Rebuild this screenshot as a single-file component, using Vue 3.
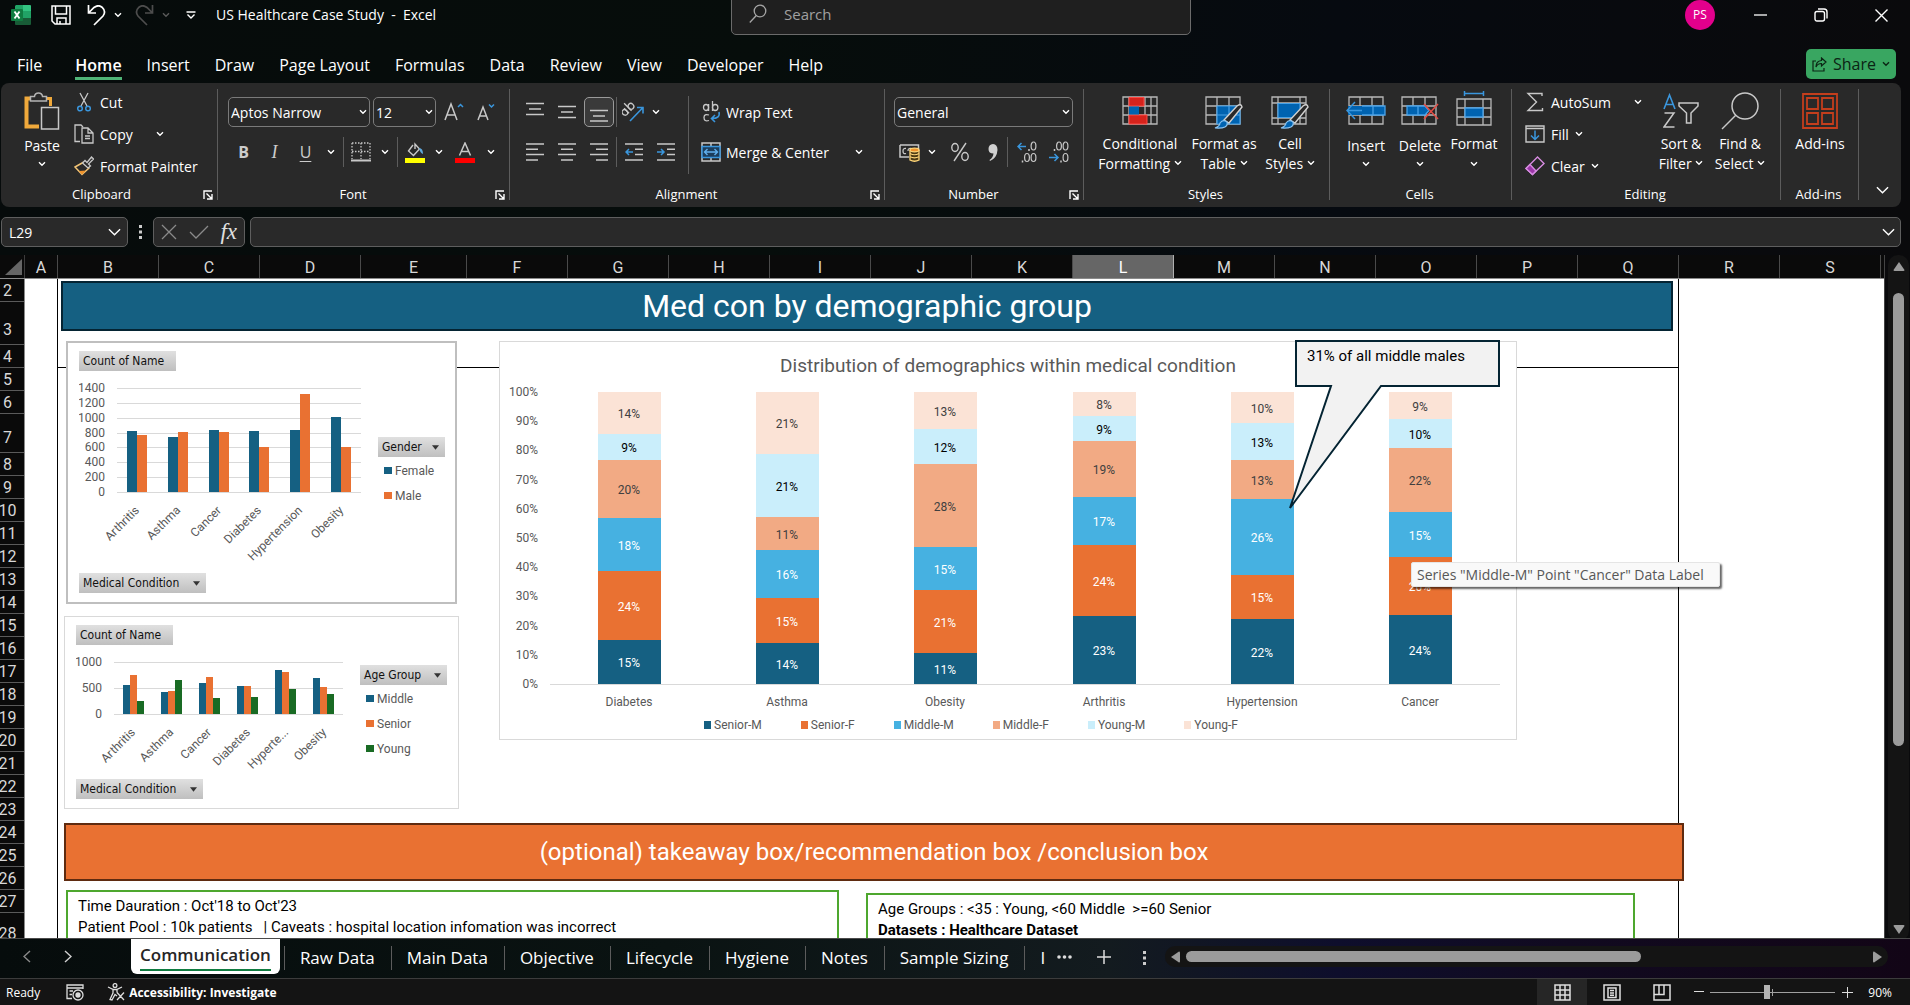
<script setup>
import { ref } from 'vue'

const ribbonTabs = ['File', 'Home', 'Insert', 'Draw', 'Page Layout', 'Formulas', 'Data', 'Review', 'View', 'Developer', 'Help']
const sheetTabs = ['Raw Data', 'Main Data', 'Objective', 'Lifecycle', 'Hygiene', 'Notes', 'Sample Sizing']
const zoom = ref(45)

const columns = 'ABCDEFGHIJKLMNOPQRS'.split('').map((name) => ({
  name,
  width: name === 'A' ? 33 : name === 'E' ? 106 : 101,
}))
const rowHeights = { 2: 23, 3: 43, 7: 39, 28: 32 }
const rows = Array.from({ length: 27 }, (_, i) => ({ n: i + 2, height: rowHeights[i + 2] || 23 }))

const conditions = ['Arthritis', 'Asthma', 'Cancer', 'Diabetes', 'Hypertension', 'Obesity']

function columnChart(opts) {
  const { left, right, zero, top, max, step, barWidth, series, labels } = opts
  const slot = (right - left) / labels.length
  const scale = (zero - top) / max
  const ticks = []
  for (let v = 0; v <= max; v += step) ticks.push({ v, y: Math.round(zero - v * scale) })
  const bars = []
  labels.forEach((label, i) => {
    const start = Math.round(left + slot * (i + 0.5) - (barWidth * series.length) / 2)
    series.forEach((s, j) => {
      const h = Math.round(s.values[i] * scale)
      bars.push({ key: label + s.name, x: start + j * barWidth, y: zero - h, w: barWidth, h, fill: s.color })
    })
  })
  const names = labels.map((text, i) => ({ text, x: Math.round(left + slot * (i + 0.5)) + 3 }))
  return { left, right, zero, ticks, bars, names, series }
}

const genderChart = columnChart({
  left: 38, right: 282, zero: 121, top: 17, max: 1400, step: 200, barWidth: 10,
  labels: conditions,
  series: [
    { name: 'Female', color: '#156082', values: [825, 745, 840, 825, 840, 1015] },
    { name: 'Male', color: '#e97132', values: [770, 810, 810, 610, 1325, 610] },
  ],
})
const ageChart = columnChart({
  left: 38, right: 267, zero: 69, top: 17, max: 1000, step: 500, barWidth: 7,
  labels: ['Arthritis', 'Asthma', 'Cancer', 'Diabetes', 'Hyperte...', 'Obesity'],
  series: [
    { name: 'Middle', color: '#156082', values: [560, 430, 600, 545, 850, 700] },
    { name: 'Senior', color: '#e97132', values: [755, 450, 715, 545, 815, 525] },
    { name: 'Young', color: '#196b24', values: [255, 660, 315, 335, 485, 390] },
  ],
})

const stackSeries = [
  { name: 'Senior-M', color: '#156082', text: '#ffffff' },
  { name: 'Senior-F', color: '#e97132', text: '#ffffff' },
  { name: 'Middle-M', color: '#46b1e1', text: '#ffffff' },
  { name: 'Middle-F', color: '#f2aa84', text: '#404040' },
  { name: 'Young-M', color: '#caeefb', text: '#000000' },
  { name: 'Young-F', color: '#fbe3d6', text: '#404040' },
]
const stackData = [
  { name: 'Diabetes', heights: [44, 69, 53, 58, 26, 42], labels: [15, 24, 18, 20, 9, 14] },
  { name: 'Asthma', heights: [41, 45, 48, 33, 63, 62], labels: [14, 15, 16, 11, 21, 21] },
  { name: 'Obesity', heights: [31, 63, 43, 83, 35, 37], labels: [11, 21, 15, 28, 12, 13] },
  { name: 'Arthritis', heights: [68, 71, 48, 56, 25, 24], labels: [23, 24, 17, 19, 9, 8] },
  { name: 'Hypertension', heights: [65, 44, 76, 39, 37, 31], labels: [22, 15, 26, 13, 13, 10] },
  { name: 'Cancer', heights: [69, 58, 45, 64, 29, 27], labels: [24, 20, 15, 22, 10, 9] },
]
const stackZero = 307
const stacks = stackData.map((c, i) => {
  const x = 98 + Math.round(i * 158.2)
  let y = stackZero
  const parts = c.heights.map((h, j) => {
    y -= h
    return { x, y, h, label: c.labels[j] + '%', fill: stackSeries[j].color, text: stackSeries[j].text }
  })
  return { name: c.name, cx: x + 31, parts }
})
const percentTicks = Array.from({ length: 11 }, (_, i) => ({ v: i * 10 + '%', y: Math.round(stackZero - i * 29.2) }))
</script>

<template>
  <div class="excel">
    <svg class="defs" aria-hidden="true">
      <symbol id="chevron" viewBox="0 0 8 6"><path d="M1 1.2 L4 4.2 L7 1.2" fill="none" stroke="currentColor" stroke-width="1.4" /></symbol>
      <symbol id="chevron-lg" viewBox="0 0 14 8"><path d="M1 1 L7 7 L13 1" fill="none" stroke="currentColor" stroke-width="1.5" /></symbol>
      <symbol id="launcher" viewBox="0 0 10 10"><path d="M1 9 V1 H9 M3.5 3.5 L8.5 8.5 M9 4 V9 H4" fill="none" stroke="currentColor" stroke-width="1.4" /></symbol>
      <symbol id="caret" viewBox="0 0 8 5"><path d="M0 0 H8 L4 5 Z" fill="#333" /></symbol>
    </svg>

    <header class="titlebar">
      <svg class="logo" viewBox="0 0 20 20">
        <path d="M5 0 H12 V7 H4 V1 Z" fill="#21a366" /><path d="M12 0 H19 Q20 0 20 1 V6 H12 Z" fill="#33c481" />
        <path d="M4 6 H12 V14 H4 Z" fill="#107c41" /><path d="M12 6 H20 V13 H12 Z" fill="#21a366" />
        <path d="M4 13 H20 V19 Q20 20 19 20 H5 Q4 20 4 19 Z" fill="#185c37" /><rect y="4" width="12" height="12" rx="1" fill="#107c41" />
        <path d="M3.5 6.5 L8.5 13.5 M8.5 6.5 L3.5 13.5" stroke="#fff" stroke-width="1.9" />
      </svg>
      <button class="tb save" aria-label="Save">
        <svg width="20" height="20" viewBox="0 0 20 20" fill="none" stroke="#fff" stroke-width="1.5"><path d="M1 1 H19 V19 H4 L1 16 Z M4.500 1 V9 H15.500 V1 M6 19 V13 H15 V19 M9 16 V19" /></svg>
      </button>
      <button class="tb undo" aria-label="Undo">
        <svg width="19" height="21" viewBox="0 0 19 21" fill="none" stroke="#fff" stroke-width="1.7"><path d="M1.500 0 V8 H9 M1.500 8 L7 2.500 Q11-.8 15 2.200 Q19.500 6.500 16 11 L7 20" /></svg>
      </button>
      <svg class="chev tbchev"><use href="#chevron" /></svg>
      <button class="tb redo" aria-label="Redo">
        <svg width="19" height="21" viewBox="0 0 19 21" fill="none" stroke="#4d4d4d" stroke-width="1.7"><path d="M17.500 0 V8 H10 M17.500 8 L12 2.500 Q8-.8 4 2.200 Q-.5 6.500 3 11 L12 20" /></svg>
      </button>
      <svg class="chev tbchev dim"><use href="#chevron" /></svg>
      <svg class="customize" width="10" height="8" viewBox="0 0 10 8" fill="none" stroke="#fff" stroke-width="1.4"><path d="M0.500 1 H9.500 M1.500 3.500 L5 7 L8.500 3.500" /></svg>
      <h1>US Healthcare Case Study&nbsp; -&nbsp; Excel</h1>
      <label class="search">
        <svg width="18" height="20" viewBox="0 0 18 20" fill="none" stroke="#a6a6a6" stroke-width="1.3"><circle cx="11" cy="7" r="5.800" /><path d="M7.300 11.500 L0.800 18.500" /></svg>
        <input type="search" placeholder="Search" aria-label="Search">
      </label>
      <div class="window">
        <span class="avatar">PS</span>
        <button aria-label="Minimize"><svg width="13" height="13" viewBox="0 0 13 13"><path d="M0 6 H13" stroke="#fff" stroke-width="1.300" /></svg></button>
        <button aria-label="Restore"><svg width="14" height="14" viewBox="0 0 14 14" fill="none" stroke="#fff" stroke-width="1.400"><rect x="1" y="3.500" width="9.500" height="9.500" rx="2" /><path d="M4 1 H10 Q13 1 13 4 V10.500" /></svg></button>
        <button aria-label="Close"><svg width="13" height="13" viewBox="0 0 13 13"><path d="M0.500 0.500 L12.500 12.500 M12.500 0.500 L0.500 12.500" stroke="#fff" stroke-width="1.400" /></svg></button>
      </div>
    </header>

    <nav class="tabs">
      <button v-for="t in ribbonTabs" :key="t" :class="{ active: t === 'Home' }">{{ t }}</button>
      <button class="share">
        <svg width="15" height="15" viewBox="0 0 15 15" fill="none" stroke="#0b2414" stroke-width="1.200"><path d="M4 4 H1 V14 H12 V11 M9.500 1 L14 5 L9.500 9 V6.500 Q5.500 6.500 4 10 Q4 4 9.500 3.500 Z" /></svg>
        Share
        <svg class="chev"><use href="#chevron" /></svg>
      </button>
    </nav>

    <section class="ribbon">
      <div class="group g-clip">
        <div class="body">
          <button class="big low paste">
            <span class="pic"><svg width="36" height="38" viewBox="0 0 36 38" fill="none"><path d="M8 6.500 H2.500 V34.500 H15" stroke="#f0a93b" stroke-width="4" /><path d="M20 6.500 H26.500 V14" stroke="#f0a93b" stroke-width="3" /><path d="M6.500 9 V4.500 H10.500 Q11 1 14.500 1 Q18 1 18.500 4.500 H22.500 V9 Z" fill="#292929" stroke="#b4b4b4" stroke-width="1.500" /><rect x="17.500" y="15.500" width="17" height="21.500" fill="#292929" stroke="#c8c8c8" stroke-width="1.500" /></svg></span>
            <span>Paste</span>
            <svg class="chev below"><use href="#chevron" /></svg>
          </button>
          <div class="list">
            <button><svg width="20" height="20" viewBox="0 0 20 20" fill="none"><path d="M6 1 L13 14 M14 1 L7 14" stroke="#c8c8c8" stroke-width="1.300" /><circle cx="6" cy="16.500" r="2.300" stroke="#3a96dd" stroke-width="1.500" /><circle cx="14" cy="16.500" r="2.300" stroke="#3a96dd" stroke-width="1.500" /></svg>Cut</button>
            <button><svg width="20" height="20" viewBox="0 0 20 20" fill="none" stroke="#c8c8c8" stroke-width="1.300"><path d="M6 17.500 H1 V1 H7 L9 3" /><path d="M8 4 H14 L19 9 V19 H8 Z M14 4 V9 H19 M11 12 H16 M11 14.500 H16" /></svg>Copy<svg class="chev gap-md"><use href="#chevron" /></svg></button>
            <button><svg width="20" height="20" viewBox="0 0 20 20" fill="none"><path d="M1 11 L9 6.500 L15 12 L8 18.500 Z" stroke="#f0c274" stroke-width="1.500" /><path d="M5 15 L12 14.500 L8 18.500 Z" fill="#f0922b" /><path d="M8.500 7 L11 4.500 L13 6.500 L17.500 1 L19.500 3 L14.500 8 L16.500 10 L14 12 Z" fill="#292929" stroke="#c8c8c8" stroke-width="1.300" /></svg>Format Painter</button>
          </div>
        </div>
        <footer>Clipboard<svg class="launch"><use href="#launcher" /></svg></footer>
      </div>

      <div class="group g-font">
        <div class="body stack">
          <div class="row">
            <label class="combo font-name"><select aria-label="Font"><option>Aptos Narrow</option></select><svg class="chev"><use href="#chevron" /></svg></label>
            <label class="combo font-size"><select aria-label="Font size"><option>12</option></select><svg class="chev"><use href="#chevron" /></svg></label>
            <button class="t w32" aria-label="Increase font size"><svg width="20" height="20" viewBox="0 0 20 20" fill="none"><path d="M1 18 L7 2 L13 18 M3 13 H11" stroke="#c8c8c8" stroke-width="1.500" /><path d="M14 5 L16.500 2.500 L19 5" stroke="#3a96dd" stroke-width="1.500" /></svg></button>
            <button class="t w32" aria-label="Decrease font size"><svg width="20" height="20" viewBox="0 0 20 20" fill="none"><path d="M2 18 L7 5 L12 18 M4 14 H10" stroke="#c8c8c8" stroke-width="1.500" /><path d="M13 2.500 L15.500 5 L18 2.500" stroke="#3a96dd" stroke-width="1.500" /></svg></button>
          </div>
          <div class="row">
            <button class="t w31 bold">B</button><button class="t w31 italic">I</button><button class="t w31 under">U</button>
            <button class="t w20" aria-label="Underline options"><svg class="chev"><use href="#chevron" /></svg></button>
            <i class="sep" />
            <button class="t w28" aria-label="Borders"><svg width="20" height="20" viewBox="0 0 20 20" fill="none" stroke="#c8c8c8" stroke-width="1.300"><path d="M1 1 H19 M1 9.500 H19 M1 1 V17 M10 1 V17 M19 1 V17" stroke-dasharray="1.500 1.500" /><path d="M0 18.500 H20" stroke-width="2" /></svg></button>
            <button class="t w20" aria-label="Border options"><svg class="chev"><use href="#chevron" /></svg></button>
            <i class="sep" />
            <button class="t w28" aria-label="Fill color"><svg width="20" height="21" viewBox="0 0 20 21" fill="none"><path d="M8 3 L3.500 9 L8.500 13.500 L14.500 7 L10 2 V7" stroke="#c8c8c8" stroke-width="1.400" /><path d="M14 6 Q18 6 18 12 Q15 11 14 6 Z" fill="#5fa8dc" /><rect y="16" width="20" height="5" fill="#ff0" /></svg></button>
            <button class="t w20" aria-label="Fill options"><svg class="chev"><use href="#chevron" /></svg></button>
            <button class="t w32" aria-label="Font color"><svg width="20" height="21" viewBox="0 0 20 21" fill="none"><path d="M4.500 13.500 L10 1 L15.500 13.500 M6.500 9.500 H13.500" stroke="#c8c8c8" stroke-width="1.500" /><rect y="16" width="20" height="5" fill="#f00" /></svg></button>
            <button class="t w20" aria-label="Font color options"><svg class="chev"><use href="#chevron" /></svg></button>
          </div>
        </div>
        <footer>Font<svg class="launch"><use href="#launcher" /></svg></footer>
      </div>

      <div class="group g-align">
        <div class="body">
          <div class="stack">
            <div class="row spaced">
              <button class="t w30" aria-label="Top align"><svg width="18" height="20" viewBox="0 0 18 20" stroke="#c8c8c8" stroke-width="1.500"><path d="M0 1.500 H18 M3 7 H15 M0 12.500 H18" /></svg></button>
              <button class="t w30" aria-label="Middle align"><svg width="18" height="20" viewBox="0 0 18 20" stroke="#c8c8c8" stroke-width="1.500"><path d="M0 4.500 H18 M3 10 H15 M0 15.500 H18" /></svg></button>
              <button class="t w30 pressed" aria-label="Bottom align"><svg width="18" height="20" viewBox="0 0 18 20" stroke="#c8c8c8" stroke-width="1.500"><path d="M0 8.500 H18 M3 14 H15 M0 19 H18" /></svg></button>
              <i class="sep flush" />
              <button class="t w28" aria-label="Orientation"><svg width="22" height="22" viewBox="0 0 22 22" fill="none"><g transform="rotate(-45 6 9)" stroke="#c8c8c8" stroke-width="1.300"><ellipse cx="2" cy="8.500" rx="2.500" ry="3" /><path d="M4.500 5 V12 M8 1.500 V12" /><ellipse cx="10.700" cy="8.500" rx="2.700" ry="3" /></g><path d="M8 20 L20.500 7 M15 6.500 H21 V12.500" stroke="#3a96dd" stroke-width="1.600" /></svg></button>
              <button class="t w14" aria-label="Orientation options"><svg class="chev"><use href="#chevron" /></svg></button>
            </div>
            <div class="row spaced">
              <button class="t w30" aria-label="Align left"><svg width="18" height="20" viewBox="0 0 18 20" stroke="#c8c8c8" stroke-width="1.500"><path d="M0 2 H18 M0 7.300 H12 M0 12.600 H18 M0 18 H12" /></svg></button>
              <button class="t w30" aria-label="Center"><svg width="18" height="20" viewBox="0 0 18 20" stroke="#c8c8c8" stroke-width="1.500"><path d="M0 2 H18 M3 7.300 H15 M0 12.600 H18 M3 18 H15" /></svg></button>
              <button class="t w30" aria-label="Align right"><svg width="18" height="20" viewBox="0 0 18 20" stroke="#c8c8c8" stroke-width="1.500"><path d="M0 2 H18 M6 7.300 H18 M0 12.600 H18 M6 18 H18" /></svg></button>
              <i class="sep flush" />
              <button class="t w30" aria-label="Decrease indent"><svg width="18" height="20" viewBox="0 0 18 20" fill="none" stroke="#c8c8c8" stroke-width="1.500"><path d="M0 2 H18 M10 7.300 H18 M10 12.600 H18 M0 18 H18" /><path d="M8 10 H1 M4 7 L1 10 L4 13" stroke="#3a96dd" /></svg></button>
              <button class="t w30" aria-label="Increase indent"><svg width="18" height="20" viewBox="0 0 18 20" fill="none" stroke="#c8c8c8" stroke-width="1.500"><path d="M0 2 H18 M10 7.300 H18 M10 12.600 H18 M0 18 H18" /><path d="M0 10 H7 M4 7 L7 10 L4 13" stroke="#3a96dd" /></svg></button>
            </div>
          </div>
          <i class="sep tall" />
          <div class="stack">
            <button class="wide"><svg width="20" height="24" viewBox="0 0 20 24" fill="none"><g stroke="#c8c8c8" stroke-width="1.300"><ellipse cx="5" cy="7.500" rx="2.500" ry="3" /><path d="M7.600 4 V11 M11.500 1 V11" /><ellipse cx="14.200" cy="7.500" rx="2.700" ry="3" /><path d="M8 15 Q3 13.500 3 17.500 Q3 22 8 20.500" /></g><path d="M18 12 Q19.500 18.500 11 18.500 M14 15 L10.500 18.500 L14 22" stroke="#3a96dd" stroke-width="1.600" /></svg>Wrap Text</button>
            <button class="wide"><svg width="20" height="20" viewBox="0 0 20 20" fill="none"><path d="M1 1 H19 V19 H1 Z M10 1 V4 M10 16 V19" stroke="#c8c8c8" stroke-width="1.500" /><path d="M1 4.500 H19 V15.500 H1 Z" fill="#1c3d5c" stroke="#3a96dd" stroke-width="1.500" /><path d="M3.500 10 H16.500 M6.500 7 L3.500 10 L6.500 13 M13.500 7 L16.500 10 L13.500 13" stroke="#60b0ee" stroke-width="1.400" /></svg>Merge &amp; Center<svg class="chev gap-lg"><use href="#chevron" /></svg></button>
          </div>
        </div>
        <footer>Alignment<svg class="launch"><use href="#launcher" /></svg></footer>
      </div>

      <div class="group g-number">
        <div class="body stack">
          <div class="row"><label class="combo format"><select aria-label="Number format"><option>General</option></select><svg class="chev"><use href="#chevron" /></svg></label></div>
          <div class="row">
            <button class="t w30" aria-label="Accounting format"><svg width="21" height="20" viewBox="0 0 21 20" fill="none"><path d="M1 3 H19.500 V9 M1 3 V15 H10" stroke="#c8c8c8" stroke-width="1.500" /><path d="M7 6.500 Q4 6 4 9 Q4 12.500 7 11.500 M12 6.500 Q9 6 9 9" stroke="#c8c8c8" stroke-width="1.300" /><path d="M11 8 V18 Q15.500 20.500 20 18 V8" fill="#4d3b14" stroke="#ffd679" stroke-width="1.300" /><ellipse cx="15.500" cy="8" rx="4.500" ry="1.800" fill="#f0922b" stroke="#ffd679" stroke-width="1.200" /><path d="M11 11.500 Q15.500 14 20 11.500 M11 14.800 Q15.500 17 20 14.800" stroke="#ffd679" stroke-width="1.200" /></svg></button>
            <button class="t w16" aria-label="Accounting options"><svg class="chev"><use href="#chevron" /></svg></button>
            <button class="t w40" aria-label="Percent style"><svg width="18" height="20" viewBox="0 0 18 20" fill="none" stroke="#c8c8c8" stroke-width="1.400"><ellipse cx="4" cy="5.500" rx="3.200" ry="4" /><ellipse cx="14" cy="14.500" rx="3.200" ry="4" /><path d="M15 1 L3 19" /></svg></button>
            <button class="t w25" aria-label="Comma style"><svg width="10" height="17" viewBox="0 0 10 17"><path d="M5 0 Q9.500 0.500 9.500 6 Q9 14 2 17 L1.500 16 Q5 13.500 5.500 9.500 Q0.500 9.500 0.500 5 Q0.500 0.500 5 0 Z" fill="#d0d0d0" /></svg></button>
            <i class="sep" />
            <button class="t w32" aria-label="Increase decimal"><svg width="20" height="22" viewBox="0 0 20 22" fill="none"><path d="M9 5.500 H1 M4.500 2 L1 5.500 L4.500 9" stroke="#3a96dd" stroke-width="1.500" /><g stroke="#c8c8c8" stroke-width="1.200"><ellipse cx="16.500" cy="5" rx="2.400" ry="4" /><ellipse cx="10" cy="16.500" rx="2.400" ry="4" /><ellipse cx="16.500" cy="16.500" rx="2.400" ry="4" /><path d="M12 8 V10 M5.500 19.500 V21.500" stroke-width="1.500" /></g></svg></button>
            <button class="t w32" aria-label="Decrease decimal"><svg width="20" height="22" viewBox="0 0 20 22" fill="none"><path d="M0 16.500 H9 M5.500 13 L9 16.500 L5.500 20" stroke="#3a96dd" stroke-width="1.500" /><g stroke="#c8c8c8" stroke-width="1.200"><ellipse cx="10" cy="5" rx="2.400" ry="4" /><ellipse cx="16.500" cy="5" rx="2.400" ry="4" /><ellipse cx="16.500" cy="16.500" rx="2.400" ry="4" /><path d="M5.500 8 V10 M12 19.500 V21.500" stroke-width="1.500" /></g></svg></button>
          </div>
        </div>
        <footer>Number<svg class="launch"><use href="#launcher" /></svg></footer>
      </div>

      <div class="group g-styles">
        <div class="body">
          <button class="big w84">
            <span class="pic"><svg width="36" height="30" viewBox="0 0 36 30" fill="none"><path d="M1 1 H35 V28 H1 Z M1 10 H35 M1 19 H35 M7 1 V28 M29 1 V28 M23 1 V28" stroke="#b8b8b8" stroke-width="1.300" /><path d="M7 1.500 H22 V10 H7 Z M7 19 H25 V28 H7 Z" fill="#d6231c" stroke="#ff4b44" /><path d="M7 10.500 H17 V18.500 H7 Z" fill="#0063b1" /></svg></span>
            <span>Conditional</span><span>Formatting <svg class="chev"><use href="#chevron" /></svg></span>
          </button>
          <button class="big w84">
            <span class="pic"><svg width="38" height="36" viewBox="0 0 38 36" fill="none"><path d="M1 4 H35 V31 H1 Z M1 13 H35 M1 22 H35 M12 4 V31 M24 4 V31" stroke="#b8b8b8" stroke-width="1.300" /><path d="M12 13 H35 V31 H12 Z M24 13 V31 M12 22 H35" fill="#0063b1" stroke="#4aa3e8" stroke-width="1.200" /><path d="M19 27 L32 13 Q36 10 37 14 L24 30 Z" fill="#292929" stroke="#d0d0d0" stroke-width="1.400" /><path d="M10 35 Q15 33 15 30 Q18 26 22 29 Q24 36 10 35 Z" fill="#0063b1" stroke="#8cc4f0" stroke-width="1.200" /></svg></span>
            <span>Format as</span><span>Table <svg class="chev"><use href="#chevron" /></svg></span>
          </button>
          <button class="big w48">
            <span class="pic"><svg width="38" height="36" viewBox="0 0 38 36" fill="none"><path d="M1 4 H35 V31 H1 Z M1 10 H35 M1 25 H35 M7 4 V31 M29 4 V31" stroke="#b8b8b8" stroke-width="1.300" /><path d="M7 10.500 H29 V24.500 H7 Z" fill="#0063b1" stroke="#4aa3e8" stroke-width="1.200" /><path d="M19 27 L32 13 Q36 10 37 14 L24 30 Z" fill="#292929" stroke="#d0d0d0" stroke-width="1.400" /><path d="M10 35 Q15 33 15 30 Q18 26 22 29 Q24 36 10 35 Z" fill="#0063b1" stroke="#8cc4f0" stroke-width="1.200" /></svg></span>
            <span>Cell</span><span>Styles <svg class="chev"><use href="#chevron" /></svg></span>
          </button>
        </div>
        <footer>Styles</footer>
      </div>

      <div class="group g-cells">
        <div class="body">
          <button class="big low w54">
            <span class="pic"><svg width="40" height="30" viewBox="0 0 40 30" fill="none"><path d="M3 1 H37 V28 H3 Z M3 10 H37 M3 19 H37 M14 1 V28 M26 1 V28" stroke="#b8b8b8" stroke-width="1.300" /><path d="M2 10 H39 V19 H2 Z" fill="#0063b1" /><path d="M16 10 H39 V19 H16 M27 10 V19" stroke="#4aa3e8" stroke-width="1.300" /><path d="M16 14.500 H1 M9 6 L1 14.500 L9 23" stroke="#3a96dd" stroke-width="1.500" /></svg></span>
            <span>Insert</span><svg class="chev below"><use href="#chevron" /></svg>
          </button>
          <button class="big low w54">
            <span class="pic"><svg width="40" height="30" viewBox="0 0 40 30" fill="none"><path d="M2 1 H36 V28 H2 Z M2 10 H36 M2 19 H36 M13 1 V28 M25 1 V28" stroke="#b8b8b8" stroke-width="1.300" /><path d="M7 10 H25 L29 14.500 L25 19 H7 Z M18 10 V19" fill="#0063b1" stroke="#4aa3e8" stroke-width="1.300" /><path d="M24 8 L38 23 M38 8 L24 23" stroke="#e04b43" stroke-width="1.600" /></svg></span>
            <span>Delete</span><svg class="chev below"><use href="#chevron" /></svg>
          </button>
          <button class="big w54">
            <span class="pic top"><svg width="36" height="36" viewBox="0 0 36 36" fill="none"><path d="M8.500 2.500 H27.500 M8.500 0 V5 M27.500 0 V5" stroke="#3a96dd" stroke-width="1.500" /><path d="M1 8 H35 V34 H1 Z M1 17 H35 M1 26 H35 M9 8 V34 M27 8 V34" stroke="#b8b8b8" stroke-width="1.300" /><path d="M9 17 H27 V26 H9 Z" fill="#0063b1" stroke="#4aa3e8" stroke-width="1.300" /></svg></span>
            <span>Format</span><svg class="chev below"><use href="#chevron" /></svg>
          </button>
        </div>
        <footer>Cells</footer>
      </div>

      <div class="group g-edit">
        <div class="body">
          <div class="list">
            <button><svg width="20" height="20" viewBox="0 0 20 20" fill="none" stroke="#c8c8c8" stroke-width="1.400"><path d="M17 4 V1.500 H3 L11.500 10 L3 18.500 H17.500 V16" /></svg>AutoSum<svg class="chev gap-md"><use href="#chevron" /></svg></button>
            <button><svg width="20" height="18" viewBox="0 0 20 18" fill="none"><path d="M1 1 H19 V17 H1 Z M1 3.500 H19" stroke="#c8c8c8" stroke-width="1.400" /><path d="M10 5.500 V14 M6 10.500 L10 14.500 L14 10.500" stroke="#3a96dd" stroke-width="1.500" /></svg>Fill<svg class="chev"><use href="#chevron" /></svg></button>
            <button><svg width="20" height="20" viewBox="0 0 20 20" fill="none" stroke="#d68be0" stroke-width="1.400"><path d="M12.500 1 L19 7.500 L7.500 18.500 L1 12.500 Z" /><path d="M5 8.500 L11 15 L7.500 18.500 L1 12.500 Z" fill="#9b36a8" /></svg>Clear<svg class="chev"><use href="#chevron" /></svg></button>
          </div>
          <button class="big w62">
            <span class="pic"><svg width="36" height="36" viewBox="0 0 36 36" fill="none"><path d="M1 16 L6.500 2 L12 16 M3 11.500 H10" stroke="#3a96dd" stroke-width="1.600" /><path d="M1.500 20 H11 L1 34 H11.500" stroke="#c8c8c8" stroke-width="1.500" /><path d="M16 10 H35 V13 L28 20 V30 H23.500 V20 L16 13 Z" stroke="#c8c8c8" stroke-width="1.500" /></svg></span>
            <span>Sort &amp;</span><span>Filter <svg class="chev"><use href="#chevron" /></svg></span>
          </button>
          <button class="big w56">
            <span class="pic"><svg width="38" height="38" viewBox="0 0 38 38" fill="none" stroke="#c8c8c8" stroke-width="1.500"><circle cx="24" cy="14" r="13" /><path d="M15 23 L1 37" /></svg></span>
            <span>Find &amp;</span><span>Select <svg class="chev"><use href="#chevron" /></svg></span>
          </button>
        </div>
        <footer>Editing</footer>
      </div>

      <div class="group g-add">
        <div class="body">
          <button class="big">
            <span class="pic"><svg width="36" height="36" viewBox="0 0 36 36" fill="none" stroke="#c43e1c" stroke-width="1.800"><path d="M1 1 H35 V35 H1 Z M5 5 H16 V16 H5 Z M20 5 H31 V16 H20 Z M5 20 H16 V31 H5 Z M20 20 H31 V31 H20 Z" /></svg></span>
            <span>Add-ins</span>
          </button>
        </div>
        <footer>Add-ins</footer>
      </div>
      <button class="collapse" aria-label="Collapse ribbon"><svg width="13" height="8"><use href="#chevron-lg" /></svg></button>
    </section>

    <section class="formula-bar">
      <label class="field name-box"><input value="L29" aria-label="Name box"><svg width="13" height="8"><use href="#chevron-lg" /></svg></label>
      <svg class="dots" width="4" height="14" viewBox="0 0 4 14" fill="#ccc"><path d="M0 0 H3 V3 H0 Z M0 5.500 H3 V8.500 H0 Z M0 11 H3 V14 H0 Z" /></svg>
      <div class="field fx">
        <svg width="16" height="16" viewBox="0 0 16 16" stroke="#8a8a8a" stroke-width="1.300"><path d="M1 1 L15 15 M15 1 L1 15" /></svg>
        <svg width="20" height="14" viewBox="0 0 20 14" fill="none" stroke="#8a8a8a" stroke-width="1.300"><path d="M1 7 L7 13 L19 1" /></svg>
        <button aria-label="Insert function"><em>fx</em></button>
      </div>
      <label class="field formula"><input aria-label="Formula"><svg width="13" height="8"><use href="#chevron-lg" /></svg></label>
    </section>

    <main class="workspace">
      <div class="grid">
        <div class="col-heads">
          <span class="corner"><svg width="17" height="16" viewBox="0 0 17 16"><path d="M17 0 V16 H0 Z" fill="#666" /></svg></span>
          <span v-for="c in columns" :key="c.name" class="col" :class="{ selected: c.name === 'L' }" :style="{ width: c.width + 'px' }">{{ c.name }}</span>
        </div>
        <div class="sheet-row">
          <div class="row-heads">
            <span v-for="r in rows" :key="r.n" :class="{ tall: r.height > 35 }" :style="{ height: r.height + 'px' }">{{ r.n }}</span>
          </div>
          <div class="canvas">
            <div class="print-top" />
            <div class="print-area" />
            <h2 class="banner blue">Med con by demographic group</h2>

            <article class="chart gender">
              <button class="pivot w97">Count of Name</button>
              <div class="chart-body">
                <svg width="290" height="202" class="axis">
                  <g v-for="t in genderChart.ticks" :key="t.v">
                    <line :x1="genderChart.left" :x2="genderChart.right" :y1="t.y + 0.5" :y2="t.y + 0.5" stroke="#d9d9d9" />
                    <text x="26" :y="t.y + 4" text-anchor="end">{{ t.v }}</text>
                  </g>
                  <rect v-for="b in genderChart.bars" :key="b.key" :x="b.x" :y="b.y" :width="b.w" :height="b.h" :fill="b.fill" />
                  <text v-for="n in genderChart.names" :key="n.text" text-anchor="end" :transform="`translate(${n.x} 140) rotate(-45)`">{{ n.text }}</text>
                </svg>
                <div class="side">
                  <button class="pivot w67">Gender<svg width="7" height="5"><use href="#caret" /></svg></button>
                  <ul><li v-for="s in genderChart.series" :key="s.name"><i :style="{ background: s.color }" />{{ s.name }}</li></ul>
                </div>
              </div>
              <button class="pivot w127">Medical Condition<svg width="7" height="5"><use href="#caret" /></svg></button>
            </article>

            <article class="chart age">
              <button class="pivot w97">Count of Name</button>
              <div class="chart-body">
                <svg width="284" height="134" class="axis">
                  <g v-for="t in ageChart.ticks" :key="t.v">
                    <line :x1="ageChart.left" :x2="ageChart.right" :y1="t.y + 0.5" :y2="t.y + 0.5" stroke="#d9d9d9" />
                    <text x="26" :y="t.y + 4" text-anchor="end">{{ t.v }}</text>
                  </g>
                  <rect v-for="b in ageChart.bars" :key="b.key" :x="b.x" :y="b.y" :width="b.w" :height="b.h" :fill="b.fill" />
                  <text v-for="n in ageChart.names" :key="n.text" text-anchor="end" :transform="`translate(${n.x} 88) rotate(-45)`">{{ n.text }}</text>
                </svg>
                <div class="side">
                  <button class="pivot w87">Age Group<svg width="7" height="5"><use href="#caret" /></svg></button>
                  <ul><li v-for="s in ageChart.series" :key="s.name"><i :style="{ background: s.color }" />{{ s.name }}</li></ul>
                </div>
              </div>
              <button class="pivot w127">Medical Condition<svg width="7" height="5"><use href="#caret" /></svg></button>
            </article>

            <article class="chart stacked">
              <h3>Distribution of demographics within medical condition</h3>
              <svg width="1016" height="334" class="axis">
                <text v-for="t in percentTicks" :key="t.v" x="38" :y="t.y + 4" text-anchor="end">{{ t.v }}</text>
                <g v-for="s in stacks" :key="s.name">
                  <g v-for="(p, j) in s.parts" :key="j">
                    <rect :x="p.x" :y="p.y" width="63" :height="p.h" :fill="p.fill" />
                    <text :x="s.cx" :y="p.y + Math.round(p.h / 2) + 5" text-anchor="middle" :style="{ fill: p.text }">{{ p.label }}</text>
                  </g>
                  <text :x="s.cx" y="329" text-anchor="middle">{{ s.name }}</text>
                </g>
                <line x1="50" x2="1000" y1="307.5" y2="307.5" stroke="#d9d9d9" />
              </svg>
              <ul><li v-for="s in stackSeries" :key="s.name"><i :style="{ background: s.color }" />{{ s.name }}</li></ul>
            </article>

            <div class="callout">
              <svg width="213" height="172" viewBox="0 0 213 172"><path d="M8 1 H211 V46 H93 L2 168 L43 46 H8 Z" fill="#f2f2f2" stroke="#042433" stroke-width="2" /></svg>
              <p>31% of all middle males</p>
            </div>
            <div class="tooltip" role="tooltip">Series "Middle-M" Point "Cancer" Data Label</div>

            <h2 class="banner orange">(optional) takeaway box/recommendation box /conclusion box</h2>
            <div class="note left">
              <p>Time Dauration : Oct'18 to Oct'23</p>
              <p>Patient Pool : 10k patients &nbsp; | Caveats : hospital location infomation was incorrect</p>
            </div>
            <div class="note right">
              <p>Age Groups : &lt;35 : Young, &lt;60 Middle&nbsp; &gt;=60 Senior</p>
              <p><b>Datasets : Healthcare Dataset</b></p>
            </div>
          </div>
        </div>
      </div>
      <div class="vscroll">
        <svg width="12" height="9" viewBox="0 0 12 9"><path d="M6 0 L11.500 8 Q11.500 9 10.500 9 H1.500 Q0.500 9 0.500 8 Z" fill="#9b9b9b" /></svg>
        <span class="thumb" />
        <svg width="12" height="9" viewBox="0 0 12 9"><path d="M6 9 L11.500 1 Q11.500 0 10.500 0 H1.500 Q0.500 0 0.500 1 Z" fill="#9b9b9b" /></svg>
      </div>
    </main>

    <nav class="sheets">
      <button class="arrow prev" aria-label="Previous sheet"><svg width="8" height="13" viewBox="0 0 8 13" fill="none" stroke="#8a8a8a" stroke-width="1.400"><path d="M7 1 L1 6.500 L7 12" /></svg></button>
      <button class="arrow" aria-label="Next sheet"><svg width="8" height="13" viewBox="0 0 8 13" fill="none" stroke="#d0d0d0" stroke-width="1.400"><path d="M1 1 L7 6.500 L1 12" /></svg></button>
      <button class="current"><span>Communication</span></button>
      <button v-for="s in sheetTabs" :key="s" class="sheet">{{ s }}</button>
      <button class="sheet cut">I</button>
      <button class="extra" aria-label="More sheets"><svg width="15" height="4" viewBox="0 0 15 4" fill="#ddd"><circle cx="2" cy="2" r="1.800" /><circle cx="7.500" cy="2" r="1.800" /><circle cx="13" cy="2" r="1.800" /></svg></button>
      <button class="extra add" aria-label="New sheet"><svg width="14" height="14" viewBox="0 0 14 14" stroke="#ddd" stroke-width="1.500"><path d="M7 0 V14 M0 7 H14" /></svg></button>
      <svg class="grip" width="4" height="14" viewBox="0 0 4 14" fill="#ccc"><path d="M0 0 H3 V3 H0 Z M0 5.500 H3 V8.500 H0 Z M0 11 H3 V14 H0 Z" /></svg>
      <div class="hscroll">
        <svg width="9" height="12" viewBox="0 0 9 12"><path d="M0 6 L8 0.500 Q9 0.500 9 1.500 V10.500 Q9 11.500 8 11.500 Z" fill="#9b9b9b" /></svg>
        <span class="hthumb" />
        <svg width="9" height="12" viewBox="0 0 9 12"><path d="M9 6 L1 0.500 Q0 0.500 0 1.500 V10.500 Q0 11.500 1 11.500 Z" fill="#9b9b9b" /></svg>
      </div>
    </nav>

    <footer class="status">
      <span>Ready</span>
      <svg class="macro" width="18" height="17" viewBox="0 0 18 17" fill="none" stroke="#ddd" stroke-width="1.300"><path d="M6 14.500 H1 V1 H17 V5 M1 4 H17 M3.500 7 H7 M3.500 10.500 H6" /><circle cx="12" cy="11" r="5" /><circle cx="12" cy="11" r="2" fill="#ddd" /></svg>
      <button class="access"><svg width="18" height="18" viewBox="0 0 18 18" fill="none" stroke="#ddd" stroke-width="1.300"><circle cx="8" cy="2.500" r="1.900" /><path d="M1 4 L6 6.500 V10 L3 16.500 L5 17 L8 11.500 L10 13 M15 4 L10 6.500 V9.500 M6 6.500 H10 M10 9.500 L17 17 M17 9.500 L10 17" /></svg>Accessibility: Investigate</button>
      <div class="views">
        <button class="on" aria-label="Normal view"><svg width="17" height="17" viewBox="0 0 17 17" fill="none" stroke="#e0e0e0" stroke-width="1.500"><path d="M1 1 H16 V16 H1 Z M1 6 H16 M1 11 H16 M6 1 V16 M11 1 V16" /></svg></button>
        <button aria-label="Page layout view"><svg width="18" height="17" viewBox="0 0 18 17" fill="none" stroke="#e0e0e0" stroke-width="1.500"><path d="M1 1 H17 V16 H1 Z M5 4 H13 V13.500 H5 Z M7 6.500 H11 M7 9 H11 M7 11.300 H11" /></svg></button>
        <button aria-label="Page break preview"><svg width="18" height="17" viewBox="0 0 18 17" fill="none" stroke="#e0e0e0" stroke-width="1.500"><path d="M1 1 H17 V16 H1 Z M1 10.500 H11 V1 M6 1 V10.500" /></svg></button>
      </div>
      <button class="zoom-btn" aria-label="Zoom out"><svg width="10" height="10" viewBox="0 0 10 10" stroke="#ddd"><path d="M0 4.500 H10" /></svg></button>
      <input v-model="zoom" class="slider" type="range" min="0" max="100" aria-label="Zoom">
      <button class="zoom-btn" aria-label="Zoom in"><svg width="11" height="11" viewBox="0 0 11 11" stroke="#ddd"><path d="M0 5.500 H11 M5.500 0 V11" /></svg></button>
      <span class="percent">90%</span>
    </footer>
  </div>
</template>

<style>
body { margin: 0; background: #060b0b; }
</style>

<style scoped>
* { box-sizing: border-box; }
.excel { height: 100vh; display: flex; flex-direction: column; overflow: hidden; font-family: "Open Sans", "Noto Sans", sans-serif; font-size: 14px; color: #fff; background: linear-gradient(90deg, #060b0b 0%, #060d0b 40%, #060a10 70%, #0a0a0c 100%); }
.defs { position: absolute; width: 0; height: 0; }
button { font: inherit; color: inherit; background: none; border: 0; padding: 0; margin: 0; white-space: nowrap; }
h1, h2, h3, p, ul { margin: 0; padding: 0; font-weight: 400; list-style: none; }
svg { flex: none; display: block; }
.chev { width: 8px; height: 6px; }

.titlebar { flex: none; height: 36px; padding: 0 22px 6px 11px; display: flex; align-items: center; position: relative; }
.logo { width: 20px; height: 20px; }
.save { margin-left: 20px; }
.undo { margin-left: 16px; }
.tbchev { margin-left: 8px; }
.redo { margin-left: 13px; }
.dim { color: #5a5a5a; }
.customize { margin-left: 16px; }
.titlebar h1 { margin-left: 20px; font-size: 14px; line-height: 20px; white-space: nowrap; }
.search { position: absolute; top: -7px; left: 50%; width: 460px; height: 42px; margin-left: -224px; padding: 0 17px; display: flex; align-items: center; gap: 17px; background: #1f1f1f; border: 1px solid #6b6b6b; border-radius: 5px; }
.search input { flex: 1; background: none; border: 0; outline: 0; padding: 0; font: 15px "Open Sans", sans-serif; color: #fff; }
.search input::placeholder { color: #a0a0a0; opacity: 1; }
.window { margin-left: auto; display: flex; align-items: center; gap: 47px; }
.avatar { width: 30px; height: 30px; margin-right: -8px; border-radius: 50%; background: #e3008c; font-size: 12px; line-height: 30px; text-align: center; }

.tabs { flex: none; height: 47px; padding: 12px 14px 3px 17px; display: flex; align-items: center; gap: 25px; font-size: 16px; }
.tabs button { height: 32px; padding-top: 5px; line-height: 24px; border-bottom: 3px solid transparent; }
.tabs button:first-child { margin-right: 8px; }
.tabs .active { font-weight: 600; border-color: #4fb477; }
.tabs .share { margin-left: auto; width: 90px; height: 30px; padding: 0; display: flex; align-items: center; justify-content: center; gap: 6px; background: #39a661; border: 0; border-radius: 5px; color: #0b2414; }

.ribbon { flex: none; height: 124px; margin: 0 9px 0 1px; padding-top: 4px; display: flex; background: #292929; border-radius: 8px; overflow: hidden; }
.group { flex: none; position: relative; display: flex; flex-direction: column; }
.group::after { content: ""; position: absolute; right: 0; top: 2px; height: 111px; width: 1px; background: #5c5c5c; }
.g-clip { width: 217px; }
.g-font { width: 292px; }
.g-align { width: 375px; }
.g-number { width: 199px; }
.g-styles { width: 246px; }
.g-cells { width: 182px; }
.g-edit { width: 269px; }
.g-add { width: 78px; }
.body { height: 100px; display: flex; }
.group footer { position: relative; height: 14px; line-height: 14px; font-size: 13px; text-align: center; padding-right: 22px; }
.g-clip footer { padding-right: 16px; }
.g-styles footer, .g-cells footer, .g-edit footer, .g-add footer { padding-right: 3px; }
.launch { position: absolute; right: 5px; top: 3px; width: 10px; height: 10px; }
.stack { display: flex; flex-direction: column; gap: 10px; padding-top: 10px; }
.g-font .stack { padding-left: 10px; }
.g-number .stack { padding-left: 9px; }
.g-align .stack:first-child { width: 178px; padding-left: 10px; }
.row { height: 30px; display: flex; align-items: center; }
.spaced { gap: 2px; }
.t { height: 30px; display: flex; align-items: center; justify-content: center; border-radius: 5px; }
.w14 { width: 14px; } .w16 { width: 16px; } .w20 { width: 20px; } .w25 { width: 25px; } .w28 { width: 28px; }
.w30 { width: 30px; } .w31 { width: 31px; } .w32 { width: 32px; } .w40 { width: 40px; } .w48 { width: 48px; }
.w54 { width: 54px; } .w56 { width: 56px; } .w62 { width: 62px; } .w84 { width: 84px; }
.w67 { width: 67px; } .w87 { width: 87px; } .w97 { width: 97px; } .w127 { width: 127px; }
.bold { font-weight: 700; font-size: 16px; color: #ccc; }
.italic { font: italic 18px "Liberation Serif", serif; color: #ccc; }
.under { font-size: 16px; color: #ccc; text-decoration: underline; text-underline-offset: 3px; }
.pressed { background: #3a3a3a; border: 1px solid #9a9a9a; }
.sep { flex: none; width: 1px; height: 30px; margin: 0 3px 0 2px; background: #5c5c5c; }
.sep.flush { margin: 0; }
.sep.tall { height: 78px; margin: 9px 10px 0 0; }
.combo { position: relative; display: block; height: 30px; }
.combo select { width: 100%; height: 30px; appearance: none; padding: 0 2px; background: #292929; color: #fff; border: 1px solid #7a7a7a; border-radius: 5px; font: 14px "Open Sans", sans-serif; }
.combo .chev { position: absolute; right: 3px; top: 12px; }
.font-name { width: 142px; margin-right: 3px; }
.font-size { width: 63px; margin-right: 2px; }
.format { width: 179px; }
.list { display: flex; flex-direction: column; margin-top: -1px; }
.list button { height: 32px; display: flex; align-items: center; gap: 6px; }
.g-clip .list { padding-left: 4px; }
.g-edit .list { width: 125px; }
.g-edit .body { padding-left: 13px; }
.gap-md { margin-left: 17px; }
.gap-lg { margin-left: 21px; }
.wide { height: 30px; display: flex; align-items: center; gap: 5px; padding-left: 2px; }
.big { display: flex; flex-direction: column; align-items: center; padding-top: 6px; height: 96px; line-height: 20px; }
.big .chev { display: inline-block; vertical-align: 3px; }
.big .below { margin-top: 7px; display: block; }
.pic { height: 36px; margin-bottom: 5px; display: flex; align-items: center; }
.pic.top { align-items: flex-start; margin-top: -2px; margin-bottom: 7px; }
.low .pic { margin-bottom: 7px; }
.low .below { margin-top: 5px; }
.paste { width: 56px; margin-left: 13px; }
.g-styles .body { padding-left: 14px; }
.g-cells .body { padding-left: 9px; }
.g-add .big { width: 100%; }
.collapse { margin: 99px 12px 0 auto; height: 8px; }

.formula-bar { flex: none; height: 48px; padding: 10px 9px 8px 1px; display: flex; }
.field { height: 30px; display: flex; align-items: center; background: #292929; border: 1px solid #5e5e5e; border-radius: 5px; }
.field input { flex: 1; min-width: 0; background: none; border: 0; outline: 0; padding: 0 0 0 7px; color: #fff; font: 14px "Open Sans", sans-serif; }
.name-box { width: 127px; padding-right: 6px; }
.dots { margin: 8px 10px 0 11px; }
.fx { width: 92px; padding: 0 7px 0 7px; justify-content: space-between; }
.fx em { font: italic 23px/26px "Liberation Serif", serif; color: #e0e0e0; }
.formula { flex: 1; margin-left: 5px; padding-right: 5px; }

.workspace { flex: 1; min-height: 0; display: flex; gap: 3px; }
.grid { flex: 1; min-width: 0; display: flex; flex-direction: column; border-right: 1px solid #444; font-family: Roboto, sans-serif; }
.col-heads { flex: none; height: 24px; display: flex; background: #0a0a0a; border-bottom: 1px solid #8a8a8a; overflow: hidden; }
.corner { flex: none; width: 25px; padding: 4px 0 0 5px; border-right: 1px solid #3c3c3c; }
.col { flex: none; border-right: 1px solid #4a4a4a; text-align: center; font-size: 16px; line-height: 25px; color: #d8d8d8; }
.col.selected { background: #666; border-color: #b0b0b0; color: #fff; }
.sheet-row { flex: 1; min-height: 0; display: flex; }
.row-heads { flex: none; width: 25px; overflow: hidden; background: #0a0a0a; border-right: 1px solid #8a8a8a; }
.row-heads span { display: flex; align-items: flex-end; justify-content: center; padding-right: 9px; border-bottom: 1px solid #5a5a5a; font-size: 16px; line-height: 20px; color: #d8d8d8; }
.row-heads .tall { padding-bottom: 4px; }
.canvas { flex: 1; min-width: 0; position: relative; overflow: hidden; background: #fff; color: #000; }
.print-top, .print-area { position: absolute; left: 32px; width: 1622px; border: solid #000; border-width: 0 1px; }
.print-top { top: 0; height: 89px; border-bottom-width: 1px; }
.print-area { top: 88px; bottom: 0; }
.banner { position: absolute; display: flex; align-items: center; justify-content: center; color: #fff; border: 2px solid; white-space: nowrap; }
.blue { left: 36px; top: 2px; width: 1612px; height: 50px; font-size: 32px; background: #156082; border-color: #042433; }
.orange { left: 39px; top: 544px; width: 1620px; height: 58px; font-size: 24px; background: #e97132; border-color: #5f2b10; }
.chart { position: absolute; display: flex; flex-direction: column; align-items: flex-start; background: #fff; border: 1px solid #d9d9d9; color: #595959; font-size: 12px; }
.axis text { font-size: 12px; fill: #595959; }
.gender { left: 41px; top: 62px; width: 391px; padding: 8px 11px 9px; border: 2px solid #bfbfbf; }
.age { left: 39px; top: 337px; width: 395px; padding: 8px 11px 9px; }
.chart-body { display: flex; }
.gender .side { padding: 66px 0 0 9px; }
.age .side { padding-top: 20px; }
.side ul { padding: 1px 0 0 6px; }
.side li { display: flex; align-items: center; gap: 3px; height: 25px; }
.side li i { width: 8px; height: 7px; }
.pivot { height: 20px; display: flex; align-items: center; justify-content: space-between; padding: 0 6px 0 4px; background: linear-gradient(#e0e0e0, #bfbfbf); color: #111; font: 12px "DejaVu Sans Condensed", "DejaVu Sans", sans-serif; }
.stacked { left: 474px; top: 62px; width: 1018px; height: 399px; padding-top: 11px; align-items: center; }
.stacked h3 { font-size: 19px; line-height: 26px; margin-bottom: -2px; }
.stacked ul { display: flex; gap: 39px; margin-right: 74px; }
.stacked li { display: flex; align-items: center; gap: 3px; line-height: 28px; }
.stacked li i { width: 7px; height: 8px; }
.callout { position: absolute; left: 1263px; top: 61px; }
.callout p { position: absolute; left: 19px; top: 6px; font-size: 15px; line-height: 20px; white-space: nowrap; }
.tooltip { position: absolute; left: 1386px; top: 283px; width: 309px; height: 25px; padding-left: 5px; background: #f9f9f9; color: #575757; border: 1px solid #e5e5e5; border-radius: 2px; box-shadow: 2px 2px 2px rgba(0, 0, 0, .6); font: 14px/23px "Open Sans", sans-serif; white-space: nowrap; }
.note { position: absolute; padding: 4px 10px; height: 100px; border: 2px solid #4ea72e; font-size: 15px; line-height: 21px; white-space: nowrap; }
.note.left { left: 41px; top: 611px; width: 773px; }
.note.right { left: 841px; top: 614px; width: 769px; }
.vscroll { flex: none; width: 21px; margin-right: 1px; margin-bottom: -3px; padding: 7px 0; display: flex; flex-direction: column; align-items: center; background: #141414; border-radius: 10px; }
.thumb { width: 11px; height: 453px; margin: 22px 0 auto; border-radius: 6px; background: #9b9b9b; }

.sheets { flex: none; height: 40px; padding-right: 22px; display: flex; border-top: 1px solid #4a4a4a; font-size: 17px; background: linear-gradient(90deg, #060c0c 0%, #0a1312 35%, #131b1f 58%, #0e0e2c 70%, #110a20 82%, #120516 100%); }
.arrow { display: flex; align-items: center; width: 40px; height: 35px; }
.prev { padding-left: 23px; width: 64px; }
.current { height: 35px; margin: 0 4px 0 27px; padding: 0 9px; background: #fff; border-radius: 0 0 6px 6px; color: #262626; font-weight: 600; }
.current span { display: block; border-bottom: 2px solid #107c41; line-height: 26px; padding-bottom: 1px; }
.sheet { position: relative; padding: 0 16px; height: 37px; line-height: 37px; }
.sheet::before { content: ""; position: absolute; left: 0; top: 7px; width: 1px; height: 24px; background: #5c5c5c; }
.cut { padding-right: 12px; }
.extra { height: 35px; display: flex; align-items: center; }
.add { margin-left: 25px; }
.grip { margin: 12px 18px 0 32px; }
.hscroll { flex: 1; height: 21px; margin-top: 7px; padding: 0 6px; display: flex; align-items: center; background: #141414; border-radius: 10px; }
.hthumb { width: 64%; height: 11px; margin: 0 auto 0 6px; border-radius: 6px; background: #9b9b9b; }

.status { flex: none; height: 27px; padding: 0 18px 0 6px; display: flex; align-items: center; background: #141414; border-top: 1px solid #3c3c3c; font-size: 12px; }
.macro { margin-left: 26px; }
.access { display: flex; align-items: center; gap: 4px; margin-left: 23px; font-weight: 700; }
.views { margin-left: auto; display: flex; align-self: stretch; }
.views button { width: 50px; display: flex; align-items: center; justify-content: center; }
.views .on { background: #262626; }
.zoom-btn { margin: 0 6px 0 7px; }
.slider { width: 125px; height: 16px; margin: 0; appearance: none; background: linear-gradient(#a0a0a0, #a0a0a0) center / 100% 1px no-repeat, linear-gradient(#a0a0a0, #a0a0a0) 50% 50% / 1px 7px no-repeat; }
.slider::-webkit-slider-thumb { appearance: none; width: 6px; height: 14px; background: #b4b4b4; }
.percent { margin-left: 9px; }
</style>
